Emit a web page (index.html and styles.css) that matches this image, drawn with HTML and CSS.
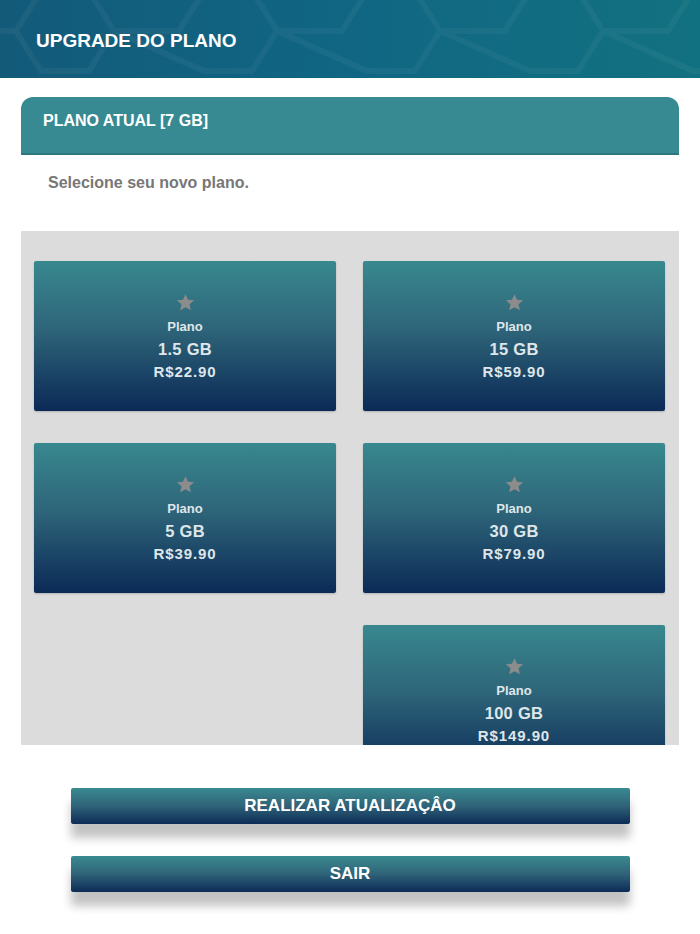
FILE: index.html
```html
<!DOCTYPE html>
<html lang="pt-BR">
<head>
<meta charset="utf-8">
<title>Upgrade do plano</title>
<link rel="stylesheet" href="styles.css">
</head>
<body>
<header class="topbar">
  <svg class="hex-bg" width="700" height="78" viewBox="0 0 700 78" aria-hidden="true">
    <g fill="none" stroke="#ffffff" stroke-opacity="0.045" stroke-width="6">
      <path d="M-98 31 L-33 31 M16 31 L41 -9 L89 -9 L114 31 L89 71 L41 71 Z M114 31 L179 31 L204 -9 L252 -9 L277 31 L252 71 L204 71 Z M277 31 L342 31 L367 -9 L415 -9 L440 31 L415 71 L367 71 Z M440 31 L505 31 L530 -9 L578 -9 L603 31 L578 71 L530 71 Z M603 31 L668 31 L693 -9 L741 -9 L766 31 L741 71 L693 71 Z M16 31 L-33 31"/>
    </g>
  </svg>
  <h1 class="topbar-title">UPGRADE DO PLANO</h1>
</header>

<main class="content">
  <section class="panel">
    <div class="panel-head">PLANO ATUAL [7 GB]</div>
    <p class="panel-hint">Selecione seu novo plano.</p>

    <div class="plans">
      <div class="plans-grid">
        <div class="plan">
          <svg class="star" viewBox="0 0 24 24"><path d="M12 2.5l2.9 6.3 6.9.7-5.2 4.6 1.5 6.8L12 17.4l-6.1 3.5 1.5-6.8-5.2-4.6 6.9-.7z"/></svg>
          <span class="plan-label">Plano</span>
          <span class="plan-size">1.5 GB</span>
          <span class="plan-price">R$22.90</span>
        </div>
        <div class="plan">
          <svg class="star" viewBox="0 0 24 24"><path d="M12 2.5l2.9 6.3 6.9.7-5.2 4.6 1.5 6.8L12 17.4l-6.1 3.5 1.5-6.8-5.2-4.6 6.9-.7z"/></svg>
          <span class="plan-label">Plano</span>
          <span class="plan-size">15 GB</span>
          <span class="plan-price">R$59.90</span>
        </div>
        <div class="plan">
          <svg class="star" viewBox="0 0 24 24"><path d="M12 2.5l2.9 6.3 6.9.7-5.2 4.6 1.5 6.8L12 17.4l-6.1 3.5 1.5-6.8-5.2-4.6 6.9-.7z"/></svg>
          <span class="plan-label">Plano</span>
          <span class="plan-size">5 GB</span>
          <span class="plan-price">R$39.90</span>
        </div>
        <div class="plan">
          <svg class="star" viewBox="0 0 24 24"><path d="M12 2.5l2.9 6.3 6.9.7-5.2 4.6 1.5 6.8L12 17.4l-6.1 3.5 1.5-6.8-5.2-4.6 6.9-.7z"/></svg>
          <span class="plan-label">Plano</span>
          <span class="plan-size">30 GB</span>
          <span class="plan-price">R$79.90</span>
        </div>
        <div class="plan plan-right">
          <svg class="star" viewBox="0 0 24 24"><path d="M12 2.5l2.9 6.3 6.9.7-5.2 4.6 1.5 6.8L12 17.4l-6.1 3.5 1.5-6.8-5.2-4.6 6.9-.7z"/></svg>
          <span class="plan-label">Plano</span>
          <span class="plan-size">100 GB</span>
          <span class="plan-price">R$149.90</span>
        </div>
      </div>
    </div>
  </section>

  <div class="actions">
    <button class="btn">REALIZAR ATUALIZAÇÂO</button>
    <button class="btn">SAIR</button>
  </div>
</main>
</body>
</html>
```

FILE: styles.css
```css
* { box-sizing: border-box; }

html, body {
  margin: 0;
  padding: 0;
  background: #ffffff;
  font-family: "Liberation Sans", Arial, sans-serif;
}

.topbar {
  position: relative;
  height: 78px;
  background: linear-gradient(90deg, #135a79 0%, #106583 45%, #127180 100%);
  overflow: hidden;
  display: flex;
  align-items: center;
  padding-left: 36px;
}

.hex-bg {
  position: absolute;
  left: 0;
  top: 0;
}

.topbar-title {
  position: relative;
  margin: 0;
  color: #ffffff;
  font-size: 19px;
  font-weight: bold;
  padding-top: 4px;
}

.content {
  padding: 19px 21px 0;
}

.panel-head {
  height: 58px;
  background: #388a92;
  border-radius: 12px 12px 0 0;
  border-bottom: 2px solid #2b7880;
  color: #ffffff;
  font-size: 16px;
  font-weight: bold;
  padding: 15px 0 0 22px;
}

.panel-hint {
  margin: 0;
  height: 76px;
  padding: 19px 0 0 27px;
  color: #777777;
  font-size: 16px;
  font-weight: bold;
}

.plans {
  background: #dcdcdc;
  height: 514px;
  overflow: hidden;
  padding: 30px 14px 0 13px;
}

.plans-grid {
  display: grid;
  grid-template-columns: 302px 302px;
  column-gap: 27px;
  row-gap: 32px;
}

.plan {
  height: 150px;
  background: linear-gradient(180deg, #38888f 0%, #2e6579 45%, #0b2a56 100%);
  border-radius: 2px;
  box-shadow: 0 1px 2px rgba(0, 0, 0, 0.2);
  display: flex;
  flex-direction: column;
  align-items: center;
  justify-content: center;
  color: #dfe6ea;
  font-weight: bold;
  padding-top: 2px;
}

.plan-right { grid-column: 2; }

.star {
  width: 21px;
  height: 21px;
  fill: #8c8c8c;
  margin-bottom: 5px;
}

.plan-label {
  font-size: 13px;
  line-height: 17px;
}

.plan-size {
  font-size: 16.5px;
  line-height: 22px;
  letter-spacing: 0.3px;
  margin-top: 3px;
}

.plan-price {
  font-size: 15px;
  line-height: 22px;
  letter-spacing: 0.9px;
  margin-top: 1px;
}

.actions {
  display: flex;
  flex-direction: column;
  align-items: center;
  gap: 32px;
  padding: 43px 0 40px;
}

.btn {
  width: 559px;
  height: 36px;
  border: none;
  border-radius: 2px;
  background: linear-gradient(180deg, #3a8a91 0%, #2f6378 50%, #0d2b57 100%);
  color: #ffffff;
  font-family: "Liberation Sans", Arial, sans-serif;
  font-size: 17px;
  font-weight: bold;
  box-shadow: 0 14px 10px rgba(0, 0, 0, 0.24);
  padding: 0;
}
```
